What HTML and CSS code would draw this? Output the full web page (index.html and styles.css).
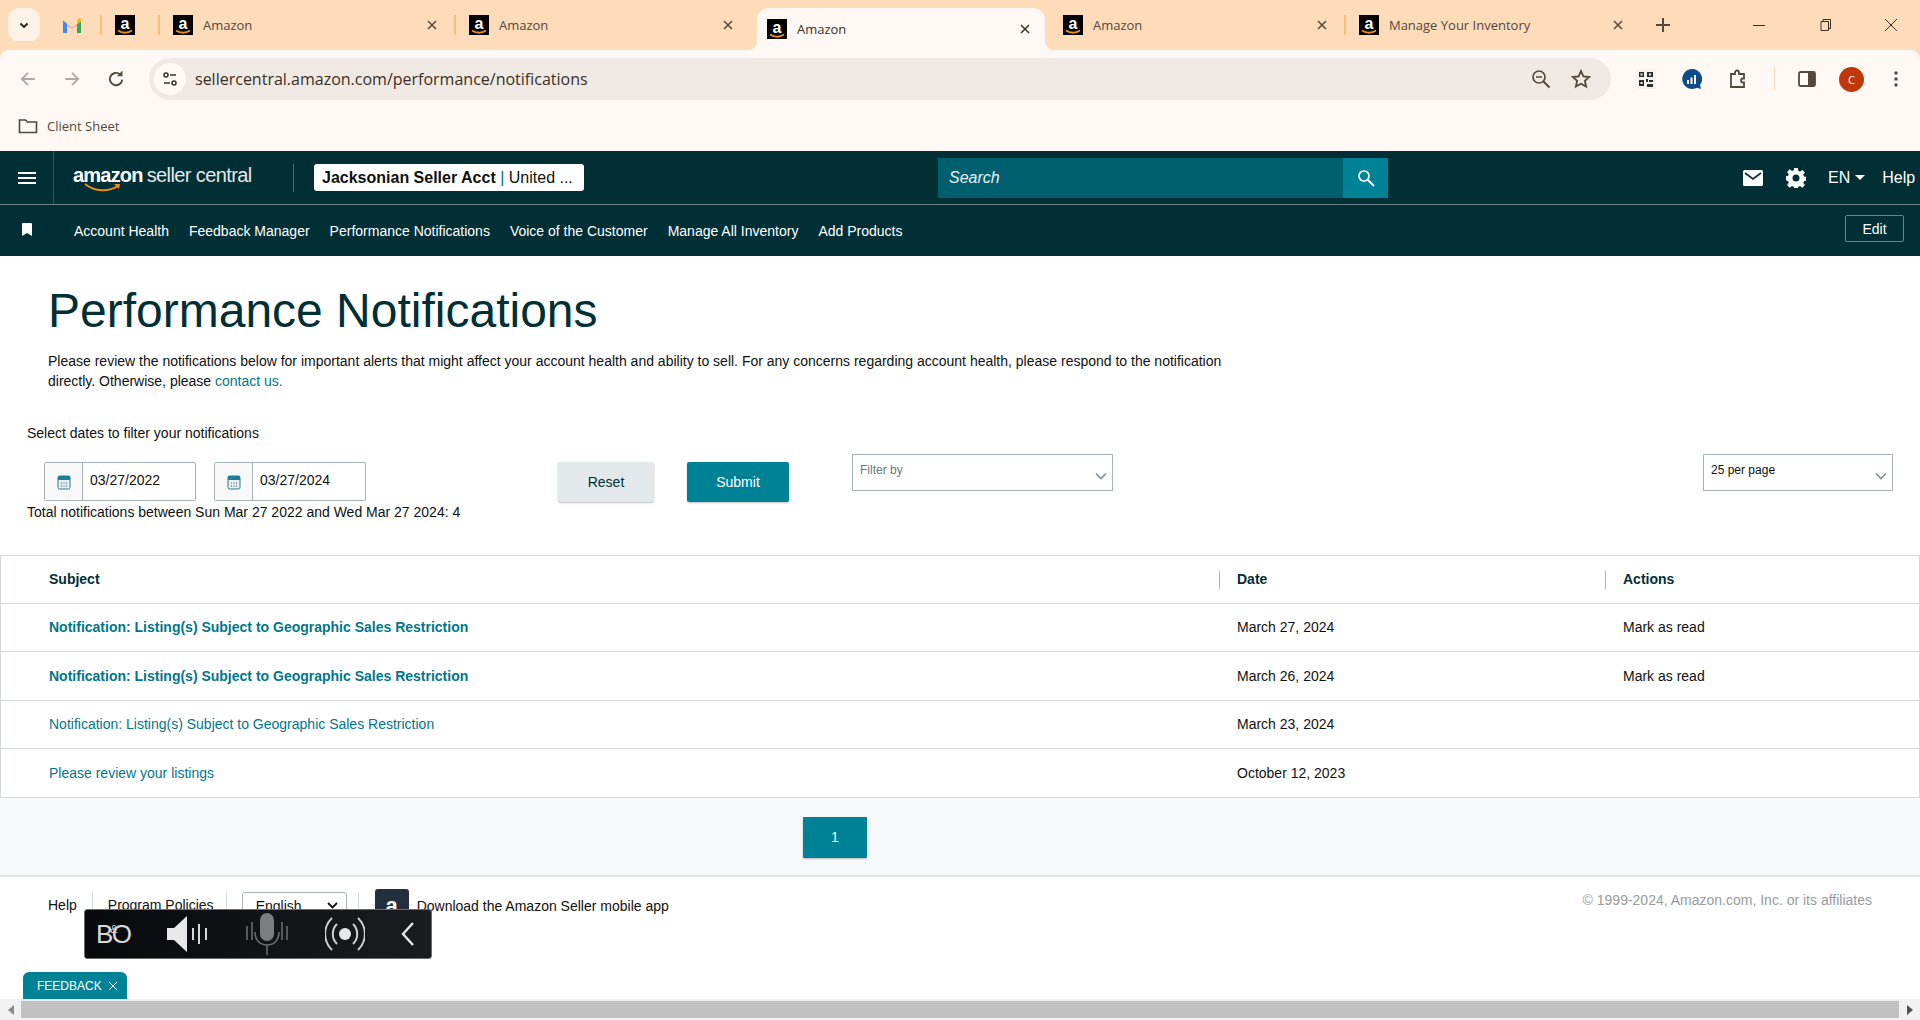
FILE: index.html
```html
<!DOCTYPE html>
<html lang="en">

<head>
    <meta charset="UTF-8">
    <meta name="viewport" content="width=device-width, initial-scale=1.0">
    <title>Performance Notifications</title>
    <link rel="stylesheet" href="styles.css">
</head>

<body>
    <svg class="defs" width="0" height="0">
        <symbol id="fav-amazon" viewBox="0 0 20 20">
            <rect width="20" height="20" fill="#000"/>
            <text x="10" y="14" text-anchor="middle" font-family="Liberation Sans" font-weight="700" font-size="16" fill="#fff">a</text>
            <path d="M3 15.5c4 3 10 3 14 0" fill="none" stroke="#e88f1f" stroke-width="1.8"/>
        </symbol>
        <symbol id="icon-close" viewBox="0 0 12 12">
            <path d="M2 2l8 8M10 2l-8 8" fill="none" stroke="currentColor" stroke-width="1.5"/>
        </symbol>
        <symbol id="icon-calendar" viewBox="0 0 14 16">
            <rect x="1" y="2" width="12" height="13" rx="1.5" fill="#e6eef0" stroke="#2b7d8f"/>
            <rect x="1" y="2" width="12" height="4" fill="#1d7f93"/>
            <path d="M4 9h1M6.500 9h1M9 9h1M4 12h1M6.500 12h1M9 12h1" stroke="#33565e"/>
        </symbol>
    </svg>

    <div class="tab-strip">
        <button class="tab-list">
            <svg width="12" height="12" viewBox="0 0 12 12"><path d="M2.500 4.500L6 8l3.500-3.500" fill="none" stroke="#2b2118" stroke-width="1.800"/></svg>
        </button>
        <div class="tab tab-pinned">
            <svg width="20" height="15" viewBox="0 0 20 15">
                <path d="M1 15V3.500l9 6.500 9-6.500V15h-4V7l-5 3.500L5 7v8z" fill="#ea4335"/>
                <path d="M1 15V2.500l4 3V15z" fill="#4285f4"/>
                <path d="M15 15V5.500l4-3V15z" fill="#34a853"/>
                <path d="M15 2l2-1.500c1-.6 2 0 2 1.500v1.500l-4 3z" fill="#fbbc04"/>
            </svg>
        </div>
        <div class="tab tab-pinned tab-sep">
            <svg class="favicon"><use href="#fav-amazon"/></svg>
        </div>
        <div class="tab tab-sep">
            <svg class="favicon"><use href="#fav-amazon"/></svg>
            <span class="tab-title">Amazon</span>
            <svg class="tab-close"><use href="#icon-close"/></svg>
        </div>
        <div class="tab tab-sep">
            <svg class="favicon"><use href="#fav-amazon"/></svg>
            <span class="tab-title">Amazon</span>
            <svg class="tab-close"><use href="#icon-close"/></svg>
        </div>
        <div class="tab tab-active">
            <svg class="favicon"><use href="#fav-amazon"/></svg>
            <span class="tab-title">Amazon</span>
            <svg class="tab-close"><use href="#icon-close"/></svg>
        </div>
        <div class="tab tab-after-active">
            <svg class="favicon"><use href="#fav-amazon"/></svg>
            <span class="tab-title">Amazon</span>
            <svg class="tab-close"><use href="#icon-close"/></svg>
        </div>
        <div class="tab tab-sep">
            <svg class="favicon"><use href="#fav-amazon"/></svg>
            <span class="tab-title">Manage Your Inventory</span>
            <svg class="tab-close"><use href="#icon-close"/></svg>
        </div>
        <div class="new-tab">
            <svg width="14" height="14" viewBox="0 0 14 14"><path d="M7 0v14M0 7h14" stroke="#54483c" stroke-width="2"/></svg>
        </div>
        <div class="window-controls">
            <svg width="14" height="14" viewBox="0 0 14 14"><path d="M1 7.500h12" stroke="#3b3026"/></svg>
            <svg width="14" height="14" viewBox="0 0 14 14"><path d="M3 3.500h7.500v9H3zM5 3.500V1.500h7.500v9h-2" fill="none" stroke="#3b3026"/></svg>
            <svg width="14" height="14" viewBox="0 0 14 14"><path d="M1 1l12 12M13 1L1 13" stroke="#3b3026"/></svg>
        </div>
    </div>

    <div class="toolbar">
        <div class="toolbar-row">
            <svg class="nav-icon" viewBox="0 0 16 16"><path d="M14 8H2.500M8 2.500L2.500 8 8 13.500" fill="none" stroke="#b0a8a2" stroke-width="1.600"/></svg>
            <svg class="nav-icon" viewBox="0 0 16 16"><path d="M2 8h11.500M8 2.500L13.500 8 8 13.500" fill="none" stroke="#b0a8a2" stroke-width="1.600"/></svg>
            <svg class="nav-icon" viewBox="0 0 16 16"><path d="M13.500 8.500A5.500 5.500 0 1 1 11.500 3.800" fill="none" stroke="#54483c" stroke-width="1.700"/><path d="M8.800 5.500h5v-5z" fill="#54483c"/></svg>
            <div class="omnibox">
                <span class="site-settings">
                    <svg width="16" height="16" viewBox="0 0 16 16"><circle cx="4" cy="4" r="2" fill="none" stroke="#3b3026" stroke-width="1.500"/><path d="M8 4h6M2 12h6" stroke="#3b3026" stroke-width="1.500"/><circle cx="12" cy="12" r="2" fill="none" stroke="#3b3026" stroke-width="1.500"/></svg>
                </span>
                <span class="url">sellercentral.amazon.com/performance/notifications</span>
                <svg class="omni-icon" viewBox="0 0 20 20"><circle cx="8" cy="8" r="6" fill="none" stroke="#54483c" stroke-width="1.700"/><path d="M5 8h6" stroke="#54483c" stroke-width="1.500"/><path d="M12.500 12.500l6 6" stroke="#54483c" stroke-width="2"/></svg>
                <svg class="omni-icon" viewBox="0 0 20 20"><path d="M10 2l2.400 5.400 5.800.6-4.300 3.900 1.200 5.700L10 14.700l-5.100 2.900 1.200-5.700L1.800 8l5.800-.6z" fill="none" stroke="#54483c" stroke-width="1.800"/></svg>
            </div>
            <div class="toolbar-actions">
                <svg class="ext" viewBox="0 0 20 20">
                    <rect width="20" height="20" rx="2" fill="#f5f3f2"/>
                    <path d="M3 3h5v5H3zM4.500 4.500v2h2v-2zM11 3h6v5h-6zM13 4.500v2h2v-2zM3 11h5v6H3zM4.500 13v2h2v-2z" fill="#2d2d2d" fill-rule="evenodd"/>
                    <path d="M10 10h2v3h-2zM13 11h4v2h-4zM11 15h6v3h-6z" fill="#2d2d2d"/>
                </svg>
                <svg class="ext" viewBox="0 0 20 20">
                    <path d="M10 0a10 10 0 0 1 8 16l1 4-4-1.200A10 10 0 1 1 10 0z" fill="#0f4a8a"/>
                    <path d="M5 11h2v4H5zM8.500 8.500h2V15h-2zM12 6h2v9h-2z" fill="#fff"/>
                </svg>
                <svg class="ext" viewBox="0 0 20 20"><path d="M3 5h4V3.500a2 2 0 0 1 4 0V5h5v4.500h-1a2 2 0 0 0 0 4h1V18H3z" fill="none" stroke="#54483c" stroke-width="1.800"/></svg>
                <span class="toolbar-sep"></span>
                <svg class="ext" viewBox="0 0 20 20"><rect x="2" y="3" width="16" height="14" rx="1.500" fill="none" stroke="#54483c" stroke-width="1.800"/><rect x="11" y="3" width="7" height="14" fill="#54483c"/></svg>
                <span class="avatar">C</span>
                <svg class="dots" viewBox="0 0 4 16"><circle cx="2" cy="2" r="1.700"/><circle cx="2" cy="8" r="1.700"/><circle cx="2" cy="14" r="1.700"/></svg>
            </div>
        </div>
        <div class="bookmarks">
            <svg width="20" height="16" viewBox="0 0 20 16"><path d="M1.500 2h6l2 2h9v10.500h-17z" fill="none" stroke="#54483c" stroke-width="1.600"/></svg>
            <span>Client Sheet</span>
        </div>
    </div>

    <div class="top-nav">
        <div class="menu-btn">
            <svg width="18" height="14" viewBox="0 0 18 14"><path d="M0 2h18M0 7h18M0 12h18" stroke="#fff" stroke-width="1.800"/></svg>
        </div>
        <div class="logo">
            <span class="logo-amazon">amazon</span><span class="logo-rest">seller central</span>
            <svg class="logo-smile" width="38" height="9" viewBox="0 0 38 9"><path d="M1 1c10 8 24 8 33 2" fill="none" stroke="#f08a1d" stroke-width="2"/><path d="M30 1l6 0-1 5z" fill="#f08a1d"/></svg>
        </div>
        <div class="account-box"><b>Jacksonian Seller Acct</b> <i>|</i> United ...</div>
        <div class="search">
            <span class="search-input">Search</span>
            <span class="search-btn">
                <svg width="18" height="18" viewBox="0 0 18 18"><circle cx="7" cy="7" r="5" fill="none" stroke="#fff" stroke-width="1.700"/><path d="M11 11l6 6" stroke="#fff" stroke-width="1.800"/></svg>
            </span>
        </div>
        <div class="nav-right">
            <svg width="20" height="16" viewBox="0 0 20 16"><rect width="20" height="16" rx="1.500" fill="#fff"/><path d="M2 3l8 6 8-6" fill="none" stroke="#002f36" stroke-width="1.600"/></svg>
            <svg class="gear" width="20" height="20" viewBox="0 0 20 20"><path fill="#fff" fill-rule="evenodd" d="M8.200 0h3.600l.5 2.800 1.700.7 2.300-1.600 2.600 2.600-1.600 2.300.7 1.700 2.800.5v3.600l-2.800.5-.7 1.700 1.600 2.300-2.600 2.600-2.300-1.600-1.700.7-.5 2.800H8.200l-.5-2.800-1.700-.7-2.300 1.600-2.600-2.600 1.600-2.300-.7-1.700L-.8 12V8.400l2.800-.5.700-1.700L1.100 3.900l2.600-2.600L6 2.900l1.700-.7zM10 6.600a3.500 3.500 0 1 0 0 7 3.500 3.500 0 0 0 0-7z"/></svg>
            <span class="lang">EN<i class="caret"></i></span>
            <span class="help">Help</span>
        </div>
    </div>
    <div class="sub-nav">
        <svg class="bookmark" width="10" height="13" viewBox="0 0 10 13"><path d="M0 1a1 1 0 0 1 1-1h8a1 1 0 0 1 1 1v12L5 10l-5 3z" fill="#fff"/></svg>
        <a href="#">Account Health</a>
        <a href="#">Feedback Manager</a>
        <a href="#">Performance Notifications</a>
        <a href="#">Voice of the Customer</a>
        <a href="#">Manage All Inventory</a>
        <a href="#">Add Products</a>
        <button class="edit-btn">Edit</button>
    </div>

    <div class="page-head">
        <h1>Performance Notifications</h1>
        <p>Please review the notifications below for important alerts that might affect your account health and ability to sell. For any concerns regarding account health, please respond to the notification directly. Otherwise, please <a href="#">contact us.</a></p>
    </div>

    <div class="filters">
        <p class="filter-label">Select dates to filter your notifications</p>
        <div class="filter-row">
            <div class="filter-dates">
                <div class="date-inputs">
                    <div class="date-input">
                        <span class="date-icon"><svg width="14" height="16"><use href="#icon-calendar"/></svg></span>
                        <span class="date-value">03/27/2022</span>
                    </div>
                    <div class="date-input">
                        <span class="date-icon"><svg width="14" height="16"><use href="#icon-calendar"/></svg></span>
                        <span class="date-value">03/27/2024</span>
                    </div>
                </div>
                <p class="total">Total notifications between Sun Mar 27 2022 and Wed Mar 27 2024: 4</p>
            </div>
            <button class="btn btn-reset">Reset</button>
            <button class="btn btn-submit">Submit</button>
            <div class="dropdown dropdown-filter">
                <span>Filter by</span>
                <svg width="12" height="8" viewBox="0 0 12 8"><path d="M1 1.500l5 5 5-5" fill="none" stroke="#7f9297" stroke-width="1.600"/></svg>
            </div>
            <div class="dropdown dropdown-page">
                <span>25 per page</span>
                <svg width="12" height="8" viewBox="0 0 12 8"><path d="M1 1.500l5 5 5-5" fill="none" stroke="#7f9297" stroke-width="1.600"/></svg>
            </div>
        </div>
    </div>

    <div class="notif-table">
        <div class="notif-row notif-head">
            <div>Subject</div>
            <div class="has-divider">Date</div>
            <div class="has-divider">Actions</div>
        </div>
        <div class="notif-row unread">
            <a href="#">Notification: Listing(s) Subject to Geographic Sales Restriction</a>
            <div>March 27, 2024</div>
            <div>Mark as read</div>
        </div>
        <div class="notif-row unread">
            <a href="#">Notification: Listing(s) Subject to Geographic Sales Restriction</a>
            <div>March 26, 2024</div>
            <div>Mark as read</div>
        </div>
        <div class="notif-row">
            <a href="#">Notification: Listing(s) Subject to Geographic Sales Restriction</a>
            <div>March 23, 2024</div>
            <div></div>
        </div>
        <div class="notif-row">
            <a href="#">Please review your listings</a>
            <div>October 12, 2023</div>
            <div></div>
        </div>
    </div>

    <div class="pagination">
        <button class="page-btn">1</button>
    </div>

    <div class="footer">
        <a href="#">Help</a>
        <a href="#" class="foot-link">Program Policies</a>
        <div class="foot-select">
            <span>English</span>
            <svg width="11" height="7" viewBox="0 0 11 7"><path d="M1 1l4.500 4.500L10 1" fill="none" stroke="#111" stroke-width="1.800"/></svg>
        </div>
        <div class="app-link">
            <span class="app-icon">a</span>
            <span>Download the Amazon Seller mobile app</span>
        </div>
        <div class="copyright">© 1999-2024, Amazon.com, Inc. or its affiliates</div>
    </div>

    <div class="hscroll">
        <span class="scroll-arrow"><svg width="6" height="10" viewBox="0 0 6 10"><path d="M6 0v10L0 5z" fill="#8a8a8a"/></svg></span>
        <span class="scroll-thumb"></span>
        <span class="scroll-arrow"><svg width="6" height="10" viewBox="0 0 6 10"><path d="M0 0v10l6-5z" fill="#505050"/></svg></span>
    </div>

    <div class="bo-bar">
        <span class="bo-logo">B<sup>&amp;</sup>O</span>
        <svg width="42" height="38" viewBox="0 0 42 38">
            <path d="M0 13h7L20 1v36L7 25H0z" fill="#e8e8e8"/>
            <path d="M26 13v12M32 9v20M39 13v12" stroke="#d8d8d8" stroke-width="2"/>
        </svg>
        <svg width="44" height="44" viewBox="0 0 44 44">
            <rect x="15" y="1" width="14" height="28" rx="7" fill="#7b7d80"/>
            <path d="M10 20c0 8 5 13 12 13s12-5 12-13M22 33v10M2 14v14M42 14v14M7 10v18M37 10v18" fill="none" stroke="#6a6c70" stroke-width="1.600"/>
        </svg>
        <svg width="40" height="38" viewBox="0 0 40 38">
            <circle cx="20" cy="19" r="6" fill="#e8e8e8"/>
            <path d="M12 9a14 14 0 0 0 0 20M28 9a14 14 0 0 1 0 20M7 3a22 22 0 0 0 0 32M33 3a22 22 0 0 1 0 32" fill="none" stroke="#d0d0d0" stroke-width="2"/>
        </svg>
        <svg width="14" height="24" viewBox="0 0 14 24"><path d="M12 1L2 12l10 11" fill="none" stroke="#e8e8e8" stroke-width="2.400"/></svg>
    </div>

    <div class="feedback">FEEDBACK <svg width="10" height="10" viewBox="0 0 10 10"><path d="M1 1l8 8M9 1L1 9" stroke="#fff"/></svg></div>
</body>

</html>
```

FILE: styles.css
```css
* {
    box-sizing: border-box;
}

html,
body {
    margin: 0;
    padding: 0;
    height: 1020px;
    overflow: hidden;
}

body {
    font-family: "Liberation Sans", Arial, sans-serif;
    font-size: 14px;
    color: #0f1111;
    background-color: #fff;
    display: flex;
    flex-direction: column;
}

a {
    text-decoration: none;
}

.defs {
    position: absolute;
}

/* browser chrome */

.tab-strip {
    height: 50px;
    flex: none;
    display: flex;
    align-items: center;
    padding-left: 8px;
    background-color: #fedcba;
    font-family: "Open Sans", sans-serif;
    font-size: 13px;
    color: #54483c;
}

.tab-list {
    width: 35px;
    height: 34px;
    margin-right: 3px;
    padding: 0;
    border: none;
    border-radius: 12px;
    background-color: #fff3e8;
    display: flex;
    align-items: center;
    justify-content: center;
}

.tab {
    position: relative;
    width: 296px;
    height: 50px;
    flex: none;
    display: flex;
    align-items: center;
    padding: 0 17px 0 14px;
}

.tab-pinned {
    width: 58px;
    padding: 0;
    justify-content: center;
}

.tab-sep::before {
    content: "";
    position: absolute;
    left: -1px;
    top: 15px;
    width: 2px;
    height: 20px;
    background-color: #fbbd75;
}

.tab-active {
    width: 288px;
    height: 42px;
    margin-top: 8px;
    margin-left: 6px;
    padding: 0 14px 0 10px;
    border-radius: 12px 12px 0 0;
    background-color: #fff8f4;
    color: #3b3026;
}

.tab-active::before,
.tab-active::after {
    content: "";
    position: absolute;
    bottom: 0;
    width: 10px;
    height: 10px;
}

.tab-active::before {
    left: -10px;
    background: radial-gradient(circle at 0 0, #fedcba 10px, #fff8f4 10.5px);
}

.tab-active::after {
    right: -10px;
    background: radial-gradient(circle at 100% 0, #fedcba 10px, #fff8f4 10.5px);
}

.tab-after-active {
    width: 300px;
    padding-left: 18px;
}

.favicon {
    width: 20px;
    height: 20px;
    margin-right: 10px;
    flex: none;
}

.tab-title {
    flex: 1;
    white-space: nowrap;
}

.tab-close {
    width: 12px;
    height: 12px;
    flex: none;
}

.new-tab {
    margin-left: 15px;
    display: flex;
}

.window-controls {
    margin-left: auto;
    width: 264px;
    padding-left: 82px;
    padding-right: 22px;
    display: flex;
    justify-content: space-between;
}

.toolbar {
    height: 101px;
    flex: none;
    background-color: #fff8f4;
    border-radius: 9px 9px 0 0;
    margin-top: 0;
    font-family: "Open Sans", sans-serif;
}

.tab-strip + .toolbar {
    box-shadow: 0 -9px 0 #fedcba;
}

.toolbar-row {
    display: flex;
    align-items: center;
    height: 50px;
    padding-top: 8px;
    padding-left: 19px;
}

.nav-icon {
    width: 18px;
    height: 18px;
    margin-right: 26px;
    flex: none;
}

.nav-icon:nth-child(3) {
    margin-right: 24px;
}

.omnibox {
    width: 1462px;
    height: 42px;
    display: flex;
    align-items: center;
    padding: 0 20px 0 5px;
    border-radius: 21px;
    background-color: #f0e8e3;
    flex: none;
}

.site-settings {
    width: 32px;
    height: 32px;
    border-radius: 50%;
    background-color: #fff8f4;
    display: flex;
    align-items: center;
    justify-content: center;
    margin-right: 9px;
}

.url {
    flex: 1;
    font-size: 16px;
    color: #3b3026;
}

.omni-icon {
    width: 20px;
    height: 20px;
    margin-left: 20px;
}

.toolbar-actions {
    display: flex;
    align-items: center;
    margin-left: 25px;
}

.ext {
    width: 20px;
    height: 20px;
    margin-right: 26px;
    flex: none;
}

.toolbar-sep {
    width: 1px;
    height: 24px;
    margin-right: 22px;
    background-color: #fbd9b5;
}

.avatar {
    width: 25px;
    height: 25px;
    border-radius: 50%;
    background-color: #c1360b;
    color: #fff;
    font-size: 11px;
    display: flex;
    align-items: center;
    justify-content: center;
    margin-right: 30px;
    margin-left: -4px;
}

.dots {
    width: 4px;
    height: 16px;
    fill: #54483c;
}

.bookmarks {
    display: flex;
    align-items: center;
    gap: 9px;
    height: 51px;
    padding-left: 18px;
    font-size: 13px;
    color: #54483c;
}

/* seller central header */

.top-nav {
    height: 54px;
    flex: none;
    display: flex;
    align-items: center;
    background-color: #002f36;
    border-bottom: 1px solid #6e8488;
    color: #fff;
}

.menu-btn {
    width: 54px;
    height: 53px;
    padding-left: 18px;
    display: flex;
    align-items: center;
    border-right: 1px solid #33585e;
}

.logo {
    position: relative;
    width: 221px;
    height: 28px;
    margin-left: 19px;
    border-right: 1px solid #4c6c71;
    white-space: nowrap;
    line-height: 22px;
}

.logo-amazon {
    font-size: 20px;
    font-weight: 700;
    letter-spacing: -0.8px;
}

.logo-rest {
    margin-left: 4px;
    font-size: 20px;
    letter-spacing: -0.6px;
    color: #e6e6e6;
}

.logo-smile {
    position: absolute;
    left: 11px;
    top: 19px;
}

.account-box {
    width: 270px;
    height: 27px;
    margin-left: 20px;
    padding-left: 8px;
    background-color: #fff;
    border-radius: 3px;
    color: #0f1111;
    font-size: 16px;
    line-height: 27px;
    white-space: nowrap;
    overflow: hidden;
}

.account-box i {
    font-style: normal;
    color: #00687a;
}

.search {
    width: 450px;
    height: 40px;
    margin-left: 354px;
    display: flex;
    background-color: #005f6f;
}

.search-input {
    flex: 1;
    padding-left: 11px;
    font-size: 16px;
    font-style: italic;
    line-height: 40px;
    color: #e6f0f2;
}

.search-btn {
    width: 45px;
    background-color: #008296;
    display: flex;
    align-items: center;
    justify-content: center;
}

.nav-right {
    flex: 1;
    display: flex;
    align-items: center;
    padding-left: 355px;
    font-size: 16px;
}

.gear {
    margin-left: 23px;
}

.lang {
    margin-left: 22px;
    display: flex;
    align-items: center;
}

.caret {
    margin-left: 5px;
    border-left: 5px solid transparent;
    border-right: 5px solid transparent;
    border-top: 5px solid #fff;
}

.help {
    margin-left: 17px;
}

.sub-nav {
    height: 51px;
    flex: none;
    display: flex;
    align-items: center;
    gap: 20px;
    padding-left: 22px;
    padding-right: 16px;
    background-color: #002f36;
}

.bookmark {
    margin-right: 22px;
    margin-top: -2px;
}

.sub-nav a {
    color: #fff;
    font-size: 14px;
    white-space: nowrap;
}

.edit-btn {
    width: 59px;
    height: 27px;
    margin-left: auto;
    margin-top: -4px;
    padding: 0;
    background: transparent;
    border: 1px solid #6e8488;
    border-radius: 2px;
    color: #fff;
    font-family: inherit;
    font-size: 14px;
}

/* page */

.page-head {
    padding: 27px 0 0 48px;
    flex: none;
}

.page-head h1 {
    margin: 0 0 12px;
    font-size: 48px;
    font-weight: 400;
    line-height: 56px;
    color: #002f36;
}

.page-head p {
    width: 1180px;
    margin: 0;
    line-height: 20px;
    color: #0f1111;
}

.page-head a {
    color: #00778a;
}

.filters {
    height: 164px;
    flex: none;
    padding: 32px 27px 0;
}

.filter-label {
    margin: 0;
    line-height: 20px;
}

.filter-row {
    display: flex;
    align-items: flex-start;
    margin-top: 11px;
}

.filter-dates {
    width: 531px;
    flex: none;
    padding-top: 8px;
}

.date-inputs {
    display: flex;
    gap: 18px;
    margin-left: 17px;
}

.date-input {
    width: 152px;
    height: 39px;
    display: flex;
    border: 1px solid #a6b2b3;
    border-radius: 2px;
}

.date-icon {
    width: 38px;
    flex: none;
    display: flex;
    align-items: center;
    justify-content: center;
    background-color: #f8f8f8;
    border-right: 1px solid #a6b2b3;
}

.date-value {
    padding-left: 7px;
    line-height: 35px;
}

.total {
    margin: 1px 0 0;
    line-height: 20px;
}

.btn {
    height: 40px;
    margin-top: 8px;
    border: none;
    border-radius: 2px;
    box-shadow: 0 1px 2px rgba(0, 0, 0, 0.25);
    font-family: inherit;
    font-size: 14px;
}

.btn-reset {
    width: 96px;
    background-color: #e3e9ea;
    color: #002f36;
}

.btn-submit {
    width: 102px;
    margin-left: 33px;
    background-color: #008296;
    color: #fff;
}

.dropdown {
    height: 37px;
    display: flex;
    justify-content: space-between;
    padding: 8px 5px 0 7px;
    border: 1px solid #a6b2b3;
    font-size: 12px;
}

.dropdown svg {
    margin-top: 9px;
}

.dropdown-filter {
    width: 261px;
    margin-left: 63px;
    color: #6c7778;
}

.dropdown-page {
    width: 190px;
    margin-left: auto;
    color: #0f1111;
}

.notif-table {
    flex: none;
    border-left: 1px solid #d5d9d9;
    border-right: 1px solid #d5d9d9;
    border-top: 1px solid #d5d9d9;
}

.notif-row {
    display: grid;
    grid-template-columns: 1218px 386px 1fr;
    align-items: center;
    height: 48.500px;
    border-bottom: 1px solid #d5d9d9;
}

.notif-row > * {
    padding-left: 18px;
}

.notif-row > :first-child {
    padding-left: 48px;
}

.notif-row a {
    color: #00778a;
}

.notif-head {
    height: 47.500px;
    font-weight: 700;
    color: #002f36;
}

.has-divider {
    position: relative;
}

.has-divider::before {
    content: "";
    position: absolute;
    left: 0;
    top: 0;
    width: 1px;
    height: 18px;
    background-color: #a6b2b3;
}

.unread {
    font-weight: 400;
}

.unread a {
    font-weight: 700;
}

.pagination {
    height: 79px;
    flex: none;
    padding: 19px 0 0 803px;
    background-color: #f7f8fa;
    border-bottom: 2px solid #e3e6e6;
}

.page-btn {
    width: 64px;
    height: 41px;
    border: none;
    border-radius: 1px;
    box-shadow: 0 1px 2px rgba(0, 0, 0, 0.25);
    background-color: #008296;
    color: #fff;
    font-family: inherit;
    font-size: 14px;
}

.footer {
    flex: 1;
    display: flex;
    align-items: flex-start;
    padding: 15px 48px 0;
    color: #0f1111;
}

.footer a {
    color: #0f1111;
    line-height: 26px;
}

.foot-link {
    margin-left: 15px;
    padding: 0 12px 0 15px;
    border-left: 1px solid #d5d9d9;
    border-right: 1px solid #d5d9d9;
}

.foot-select {
    width: 105px;
    height: 28px;
    margin-left: 15px;
    padding: 0 8px 0 13px;
    display: flex;
    align-items: center;
    justify-content: space-between;
    border: 1px solid #a6b2b3;
    border-radius: 3px;
}

.app-link {
    display: flex;
    align-items: center;
    gap: 8px;
    margin-left: 11px;
    padding-left: 16px;
    border-left: 1px solid #d5d9d9;
    height: 28px;
}

.app-icon {
    width: 34px;
    height: 34px;
    margin-top: 0;
    border-radius: 3px;
    background-color: #232f3e;
    color: #fff;
    font-weight: 700;
    font-size: 22px;
    line-height: 34px;
    text-align: center;
}

.copyright {
    margin-left: auto;
    color: #969c9c;
}

.hscroll {
    height: 21px;
    flex: none;
    display: flex;
    align-items: center;
    background-color: #f1f1f1;
}

.scroll-arrow {
    width: 21px;
    display: flex;
    justify-content: center;
    flex: none;
}

.scroll-thumb {
    flex: 1;
    height: 17px;
    background-color: #c1c1c1;
}

.bo-bar {
    position: absolute;
    left: 84px;
    top: 909px;
    width: 348px;
    height: 50px;
    display: flex;
    align-items: center;
    justify-content: space-between;
    padding: 0 16px 0 11px;
    border-radius: 3px;
    border: 1px solid #6a6c70;
    background: linear-gradient(90deg, #08090d, #1a1c20);
}

.bo-logo {
    color: #d8d8d8;
    font-size: 26px;
    letter-spacing: -1px;
    font-weight: 400;
    white-space: nowrap;
}

.bo-logo sup {
    font-size: 11px;
    margin: 0 -5px 0 -2px;
}

.feedback {
    position: absolute;
    left: 23px;
    top: 972px;
    width: 104px;
    height: 27px;
    display: flex;
    align-items: center;
    gap: 6px;
    padding-left: 14px;
    border-radius: 6px 6px 0 0;
    background-color: #008296;
    color: #fff;
    font-size: 12px;
}
```
